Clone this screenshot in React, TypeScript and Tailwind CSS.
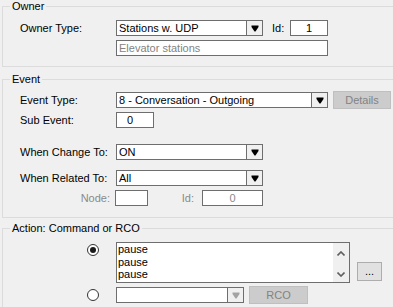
import React from 'react';

const font = { fontFamily: '"Liberation Sans", Arial, sans-serif' };

function Arrow({ disabled }: { disabled?: boolean }) {
  return (
    <svg width="8" height="7" viewBox="0 0 8 7">
      <polygon points="0.5,0.5 7.5,0.5 7.5,2 4.5,6.5 3.5,6.5 0.5,2" fill={disabled ? '#a3a3a3' : '#000'} />
    </svg>
  );
}

function Combo({ w, value, disabled }: { w: string; value?: string; disabled?: boolean }) {
  return (
    <div className={`${w} h-[16px] flex border border-[#6e6e6e] bg-white`}>
      <div className="flex-1 pl-[2px] leading-[14px] truncate">{value}</div>
      <div className="w-[16px] h-full border-l border-[#6e6e6e] bg-[#f0f0f0] flex items-center justify-center">
        <Arrow disabled={disabled} />
      </div>
    </div>
  );
}

function Field({ w, children, className = '' }: { w: string; children?: React.ReactNode; className?: string }) {
  return (
    <div className={`${w} h-[16px] border border-[#6e6e6e] bg-white leading-[14px] ${className}`}>
      {children}
    </div>
  );
}

function Group({ title, className = '', children }: { title: string; className?: string; children: React.ReactNode }) {
  return (
    <fieldset className={`ml-[2px] w-[400px] border border-[#dcdcdc] ${className}`}>
      <legend className="ml-[7px] px-[2px] leading-[13px]">{title}</legend>
      {children}
    </fieldset>
  );
}

function Radio({ checked }: { checked?: boolean }) {
  return (
    <div className="w-[12px] h-[12px] rounded-full border border-[#333333] bg-white flex items-center justify-center">
      {checked && <div className="w-[6px] h-[6px] rounded-full bg-[#1a1a1a]" />}
    </div>
  );
}

function Chevron({ up }: { up?: boolean }) {
  return (
    <svg width="8" height="5" viewBox="0 0 8 5">
      <polyline
        points={up ? '0.5,4.5 4,1 7.5,4.5' : '0.5,0.5 4,4 7.5,0.5'}
        fill="none"
        stroke="#606060"
        strokeWidth="1.6"
      />
    </svg>
  );
}

export default function App() {
  return (
    <div className="w-[393px] h-[307px] overflow-hidden bg-[#f0f0f0] text-[11px] text-black" style={font}>
      {/* Owner */}
      <Group title="Owner" className="pb-[10px]">
        <div className="mt-[7px] pl-[17px] flex items-center h-[16px]">
          <div className="w-[96px]">Owner Type:</div>
          <Combo w="w-[147px]" value="Stations w. UDP" />
          <div className="ml-[9px] w-[18px]">Id:</div>
          <Field w="w-[38px]" className="text-center">1</Field>
        </div>
        <div className="mt-[4px] pl-[113px]">
          <Field w="w-[212px]" className="pl-[2px] text-[#838383]">Elevator stations</Field>
        </div>
      </Group>

      {/* Event */}
      <Group title="Event" className="mt-[6px] pb-[11px]">
        <div className="mt-[5px] pl-[17px] flex items-center h-[18px]">
          <div className="w-[96px]">Event Type:</div>
          <Combo w="w-[212px]" value="8 - Conversation - Outgoing" />
          <button className="ml-[5px] w-[58px] h-[18px] border border-[#bfbfbf] bg-[#cccccc] text-[#838383] leading-[16px]">
            Details
          </button>
        </div>
        <div className="mt-[3px] pl-[17px] flex items-center h-[16px]">
          <div className="w-[96px]">Sub Event:</div>
          <Field w="w-[38px]" className="pl-[10px]">0</Field>
        </div>
        <div className="mt-[16px] pl-[17px] flex items-center h-[16px]">
          <div className="w-[96px]">When Change To:</div>
          <Combo w="w-[147px]" value="ON" />
        </div>
        <div className="mt-[10px] pl-[17px] flex items-center h-[16px]">
          <div className="w-[96px]">When Related To:</div>
          <Combo w="w-[147px]" value="All" />
        </div>
        <div className="mt-[4px] pl-[17px] flex items-center h-[16px]">
          <div className="w-[95px] pr-[5px] text-right text-[#8a8a8a]">Node:</div>
          <Field w="w-[33px]" />
          <div className="w-[54px] pr-[8px] text-right text-[#8a8a8a]">Id:</div>
          <Field w="w-[61px]" className="text-center text-[#8a8a8a]">0</Field>
        </div>
      </Group>

      {/* Action */}
      <Group title="Action: Command or RCO" className="mt-[4px] pb-[10px]">
        <div className="mt-[7px] flex items-start">
          <div className="ml-[84px] mt-[2px]">
            <Radio checked />
          </div>
          <div className="ml-[17px] w-[234px] h-[41px] border border-[#6e6e6e] bg-white flex">
            <div className="flex-1 pl-[1px] leading-[12.5px]">
              <div>pause</div>
              <div>pause</div>
              <div>pause</div>
            </div>
            <div className="w-[16px] h-full bg-[#f0f0f0] flex flex-col items-center justify-between pt-[8px] pb-[5px]">
              <Chevron up />
              <Chevron />
            </div>
          </div>
          <button className="ml-[7px] mt-[20px] w-[25px] h-[19px] border border-[#adadad] bg-[#e1e1e1] leading-[15px]">
            ...
          </button>
        </div>
        <div className="mt-[3px] flex items-center h-[18px]">
          <div className="ml-[84px]">
            <Radio />
          </div>
          <div className="ml-[17px]">
            <Combo w="w-[128px]" disabled />
          </div>
          <button className="ml-[5px] w-[59px] h-[18px] border border-[#bfbfbf] bg-[#cccccc] text-[#838383] leading-[16px]">
            RCO
          </button>
        </div>
      </Group>
    </div>
  );
}
